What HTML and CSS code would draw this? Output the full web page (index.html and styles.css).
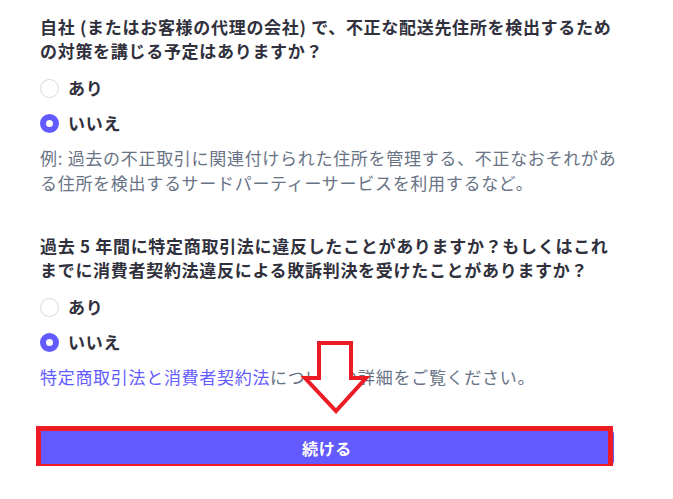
FILE: index.html
```html
<!DOCTYPE html>
<html lang="ja">
<head>
<meta charset="utf-8">
<link rel="stylesheet" href="styles.css">
</head>
<body>
<main class="form">
  <section class="field">
    <p class="question">自社 (またはお客様の代理の会社) で、不正な配送先住所を検出するための対策を講じる予定はありますか？</p>
    <div class="options">
      <label class="option"><span class="radio"></span><span class="label">あり</span></label>
      <label class="option"><span class="radio checked"></span><span class="label">いいえ</span></label>
    </div>
    <p class="help">例: 過去の不正取引に関連付けられた住所を管理する、不正なおそれがある住所を検出するサードパーティーサービスを利用するなど。</p>
  </section>
  <section class="field">
    <p class="question">過去 5 年間に特定商取引法に違反したことがありますか？もしくはこれまでに消費者契約法違反による敗訴判決を受けたことがありますか？</p>
    <div class="options">
      <label class="option"><span class="radio"></span><span class="label">あり</span></label>
      <label class="option"><span class="radio checked"></span><span class="label">いいえ</span></label>
    </div>
    <p class="help"><a class="link" href="#">特定商取引法と消費者契約法</a>についての詳細をご覧ください。</p>
  </section>
  <div class="actions">
    <button class="continue" type="button">続ける</button>
    <span class="highlight"></span>
  </div>
  <svg class="arrow" width="673" height="499" viewBox="0 0 673 499">
    <polygon points="319,343 351,343 351,378 366,378 336,411 305,378 319,378" fill="#ffffff" stroke="#ed1c24" stroke-width="4" stroke-linejoin="miter"/>
  </svg>
</main>
</body>
</html>
```
FILE: styles.css
```css
html, body {
  margin: 0;
  padding: 0;
  background: #ffffff;
}
body {
  font-family: "Noto Sans CJK JP", "Noto Sans", sans-serif;
  font-size: 17px;
  letter-spacing: 0.7px;
  color: #30313d;
}
.form {
  width: 580px;
  padding: 15px 0 0 40px;
}
.field + .field {
  margin-top: 39px;
}
.question {
  margin: 0;
  font-weight: 700;
  line-height: 24px;
  color: #30313d;
}
.options {
  margin-top: 13px;
  display: flex;
  flex-direction: column;
  gap: 11px;
}
.option {
  display: flex;
  align-items: center;
  height: 24px;
  gap: 9px;
}
.radio {
  box-sizing: border-box;
  width: 19px;
  height: 19px;
  border-radius: 50%;
  border: 1.5px solid #d5dbe1;
  background: #ffffff;
  flex: none;
}
.radio.checked {
  border: 6.5px solid #635bff;
  background: #ffffff;
}
.label {
  font-weight: 700;
  line-height: 24px;
}
.help {
  margin: 10px 0 0;
  line-height: 25px;
  color: #687385;
}
.link {
  color: #635bff;
  text-decoration: none;
}
.actions {
  position: relative;
  margin-top: 40px;
}
.continue {
  display: block;
  width: 574px;
  height: 37px;
  border: none;
  border-radius: 5px;
  background: #635bff;
  color: #ffffff;
  font-family: inherit;
  font-size: 16px;
  font-weight: 700;
  letter-spacing: 0.7px;
}
.highlight {
  position: absolute;
  left: -4px;
  top: -3px;
  width: 577px;
  height: 43px;
  box-sizing: border-box;
  border: 5px solid #ed1c24;
}
.arrow {
  position: absolute;
  left: 0;
  top: 0;
  pointer-events: none;
}
```
